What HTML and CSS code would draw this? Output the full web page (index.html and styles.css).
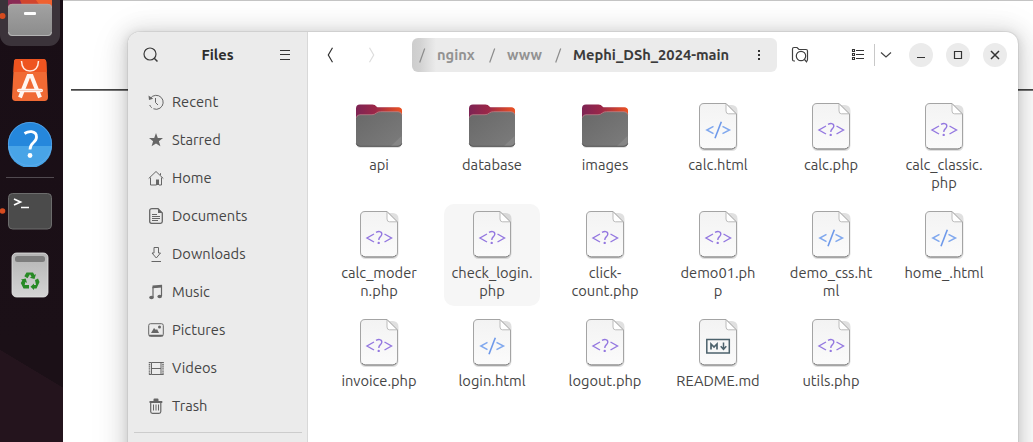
FILE: index.html
```html
<!DOCTYPE html>
<html lang="en">
<head>
<meta charset="utf-8">
<title>Files</title>
<link rel="stylesheet" href="styles.css">
</head>
<body>
<svg class="defs" width="0" height="0">
  <defs>
    <linearGradient id="fold-back" x1="0" x2="1"><stop offset="0" stop-color="#7d2454"/><stop offset=".42" stop-color="#9c2748"/><stop offset=".7" stop-color="#c43d33"/><stop offset="1" stop-color="#ec5324"/></linearGradient>
    <linearGradient id="fold-front" x1="0" y1="0" x2="1" y2="1"><stop offset="0" stop-color="#686868"/><stop offset="1" stop-color="#7c7c7c"/></linearGradient>
    <linearGradient id="paper" x1="0" y1="0" x2="0" y2="1"><stop offset="0" stop-color="#f3f3f3"/><stop offset="1" stop-color="#fbfbfb"/></linearGradient>
    <linearGradient id="drawer" x1="0" y1="0" x2="0" y2="1"><stop offset="0" stop-color="#a2a2a2"/><stop offset="1" stop-color="#8c8c8c"/></linearGradient>
    <linearGradient id="bin" x1="0" y1="0" x2="0" y2="1"><stop offset="0" stop-color="#b4b4b4"/><stop offset="1" stop-color="#d4d4d4"/></linearGradient>
    <symbol id="folder" viewBox="0 0 48 50">
      <rect x="1.500" y="7" width="45" height="39" rx="4" fill="#000" opacity=".12"/>
      <path d="M22 5.500H43.500Q47 5.500 47 9.500V26H22Z" fill="url(#fold-back)"/>
      <path d="M1 6.500Q1 2.500 5 2.500H17.500Q20 2.500 21.500 4.500L22.500 5.500H43.500Q47 5.500 47 9.500V26H1Z" fill="url(#fold-back)"/>
      <path d="M1 17.500Q1 13 5 13H17Q19.500 13 21.500 11.200Q23 10 25.500 10H43Q47 10 47 14V40.500Q47 44.500 43 44.500H5Q1 44.500 1 40.500Z" fill="url(#fold-front)"/>
      <path d="M1.500 15.500Q2 12.700 5 12.700H17Q19.500 12.700 21.500 10.900Q23 9.700 25.500 9.700H43Q46 9.700 46.700 12.500" fill="none" stroke="#b5848a" stroke-width=".8"/>
      <path d="M36 44L46.500 34V40.500Q46.500 44 43 44Z" fill="#868686"/>
      <path d="M1.300 41.500Q2 44.300 5 44.300H43Q46 44.300 46.700 41.500" fill="none" stroke="#555" stroke-width="1"/>
    </symbol>
    <symbol id="page" viewBox="0 0 48 50">
      <rect x="5" y="3" width="38.500" height="46" rx="5.500" fill="#000" opacity=".12"/>
      <path d="M10 1.500H32L42.500 12V42Q42.500 47 37.500 47H10.500Q5.500 47 5.500 42V6Q5.500 1.500 10 1.500Z" fill="url(#paper)" stroke="#a4a4a4" stroke-width="1"/>
      <path d="M7 45Q8.500 47 10.500 47H37.500Q39.500 47 41 45" fill="none" stroke="#888" stroke-width="1"/>
      <path d="M32 1.800V9Q32 11.800 34.500 11.800H42.200Z" fill="#fff" stroke="#b4b4b4" stroke-width=".9"/>
    </symbol>
    <symbol id="php" viewBox="0 0 48 50">
      <use href="#page"/>
      <g fill="none" stroke="#9478e0" stroke-width="1.400">
        <path d="M19 24L12 28L19 32M29.500 24L36.500 28L29.500 32"/>
        <path d="M21 22.300Q23 21.300 24.800 21.600Q27 22 26.800 24.300Q26.700 25.700 25.200 26.900Q23.700 28.200 23.800 30"/>
      </g>
      <circle cx="23.700" cy="32.900" r="1.200" fill="#9478e0"/>
    </symbol>
    <symbol id="html" viewBox="0 0 48 50">
      <use href="#page"/>
      <path d="M19.500 24.300L12.800 28L19.500 31.700M28.500 24.300L35.500 28L28.500 31.700" fill="none" stroke="#80a8ee" stroke-width="1.500"/>
      <path d="M27.300 19.700L21 36.300" stroke="#6e99ea" stroke-width="1.600"/>
    </symbol>
    <symbol id="md" viewBox="0 0 48 50">
      <use href="#page"/>
      <rect x="12.800" y="21.500" width="22.500" height="13.500" fill="#f6f7f7" stroke="#4c626c" stroke-width="1.500"/>
      <path d="M17 31.500V26L20 29L23 26V31.500" fill="none" stroke="#4c626c" stroke-width="1.700"/>
      <path d="M29.500 24.500V30.500M26.700 28.300L29.500 31.300L32.300 28.300" fill="none" stroke="#4c626c" stroke-width="1.500"/>
    </symbol>
  </defs>
</svg>

<div class="desktop">
  <nav class="dock">
    <div class="dock-active">
      <svg width="60" height="46" viewBox="0 0 60 46">
        <path d="M8 0H52V14H8Z" fill="#8a2a55"/><path d="M20 0H52V10H24Z" fill="#d2452e"/><path d="M36 0H52V10H43Z" fill="#ef6130"/>
        <rect x="8" y="4" width="44" height="32" rx="4" fill="url(#drawer)"/>
        <path d="M8.500 8Q8.500 4.300 12 4.300H48Q51.500 4.300 51.500 8" fill="none" stroke="#b7a5a4"/>
        <path d="M8.500 32Q9 35.500 12 35.500H48Q51 35.500 51.500 32" fill="none" stroke="#b4b4b4"/>
        <rect x="24" y="12" width="12" height="3" rx="1" fill="#fff"/>
        <circle cx="2.500" cy="16" r="3" fill="#d64b1f"/>
      </svg>
    </div>
    <svg class="dock-store" width="60" height="43" viewBox="0 0 60 43">
      <path d="M14 4Q14 1 17 1H43Q46 1 46.300 4L48 39Q48 43 44.500 43H15.500Q12 43 12 39Z" fill="#f06a34"/>
      <path d="M14 4Q14 1 17 1H43Q46 1 46.300 4L46.700 14H13.500Z" fill="#ee5420"/>
      <path d="M21.500 3Q22 13 30 13Q38 13 38.500 3" fill="none" stroke="#ffe9df" stroke-width="1.500"/>
      <g fill="none" stroke="#fff6f1"><path d="M20 39.500L28.500 18H31.500L40 39.500" stroke-width="4"/><path d="M18.800 32.500H41.200" stroke-width="3.600" stroke-linecap="round"/></g>
      <path d="M18 32.500H42" stroke="#f6c4b0" stroke-width=".8"/>
    </svg>
    <svg class="dock-help" width="60" height="46" viewBox="0 0 60 46">
      <circle cx="30" cy="23" r="22" fill="#2587dc"/><path d="M8 25H52A22 22 0 0 1 8 25Z" fill="#48a4e7"/>
      <circle cx="30" cy="23" r="21.600" fill="none" stroke="#62acec" stroke-width=".7"/>
      <path d="M24.500 12.500Q28 10.300 31.500 10.700Q36.500 11.300 36.500 16Q36.500 19 33.500 21.500Q30 24.500 30 28.500" fill="none" stroke="#fff" stroke-width="2.800"/>
      <circle cx="30" cy="34.500" r="2.400" fill="#fff"/>
    </svg>
    <div class="dock-line"></div>
    <svg class="dock-term" width="60" height="37" viewBox="0 0 60 37">
      <rect x="8.500" y=".5" width="43" height="35.500" rx="4" fill="#4b4b4b" stroke="#6c6c6c"/>
      <path d="M14 6L20.500 9L14 12" fill="none" stroke="#fff" stroke-width="1.700"/><path d="M21 14.500H29" stroke="#fff" stroke-width="1.500"/>
      <circle cx="2.500" cy="18" r="2.800" fill="#d64b1f"/>
    </svg>
    <svg class="dock-trash" width="60" height="46" viewBox="0 0 60 46">
      <rect x="12" y="1" width="36" height="44" rx="4.500" fill="url(#bin)" stroke="#e4e4e4" stroke-width=".8"/>
      <rect x="15" y="4" width="30" height="6" rx="2.500" fill="#7d7d7d"/>
      <g fill="#288a25">
        <path d="M26.500 20.500H33L34.500 23L36 22L34.500 27L29.800 25.700L31.500 24.700L30 22.300L27.500 26.300L24.300 24.300Z"/>
        <path d="M35 28L38 26.500L39.500 30L36.500 36.500H34V38L30.500 34.700L34 31.500V33H36Z"/>
        <path d="M29 33V36.500H23.500L20.800 31L22.300 28.500L21 27.500L25.700 26.500L27 31L25.300 30L24.700 33Z"/>
      </g>
    </svg>
  </nav>

  <main class="backdrop">
    <hr class="rule">
  </main>

  <section class="window">
    <aside class="sidebar">
      <header class="side-head">
        <svg width="16" height="16" viewBox="0 0 16 16" fill="none" stroke="#3b3b3b"><circle cx="7" cy="7" r="6" stroke-width="1.200"/><path d="M11 11L14.500 14.500" stroke-width="1.500"/></svg>
        <h1>Files</h1>
        <svg width="16" height="16" viewBox="0 0 16 16" stroke="#333" stroke-width="1"><path d="M3 3.500H13M3 7.500H13M3 12.500H13"/></svg>
      </header>
      <ul class="places">
        <li><svg viewBox="0 0 16 16"><path d="M2.500 4.200A7 7 0 1 1 1.700 11" stroke-dasharray="31 2"/><path d="M7.500 4V8.500L10 11"/><path class="solid" d="M.5 1.500L1 6L5.200 4.800Z"/></svg><span>Recent</span></li>
        <li><svg viewBox="0 0 16 16"><path class="solid" d="M8 1L9.800 5.900L15 6.100L10.900 9.300L12.400 14.300L8 11.400L3.600 14.300L5.100 9.300L1 6.100L6.200 5.900Z"/></svg><span>Starred</span></li>
        <li><svg viewBox="0 0 16 16"><path d="M.7 8.500L8 1.500L15.300 8.500M2.500 7.500V15H8.500M13.500 7.500V15H11M12.500 3.200V5"/><path class="solid" d="M8 9.500H11V15H8Z"/></svg><span>Home</span></li>
        <li><svg viewBox="0 0 16 16"><path d="M4 .7H10L14.300 5V13.500Q14.300 15.300 12.500 15.300H3.500Q1.700 15.300 1.700 13.500V2.500Q1.700.7 4 .7Z" stroke-width="1.300"/><path class="solid" d="M10 .5V5H14.500Z"/><path d="M4 6.500H9M4 8.500H12M4 10.500H12M4 12.500H10"/></svg><span>Documents</span></li>
        <li><svg viewBox="0 0 16 16"><path d="M6 1.500H10.500V7H12.500L8.300 12L4 7H6ZM3.500 15.500H13"/></svg><span>Downloads</span></li>
        <li><svg viewBox="0 0 16 16"><path d="M5 13V3.500L13.500 2V12" stroke-width="1.200"/><path class="solid" d="M4.500 1.500L14 .7V3.500L4.500 4.300Z"/><ellipse class="solid" cx="3.500" cy="13.500" rx="2.300" ry="1.800"/><ellipse class="solid" cx="11.700" cy="12.500" rx="2.300" ry="1.800"/></svg><span>Music</span></li>
        <li><svg viewBox="0 0 16 16"><rect x=".7" y="1.700" width="14.600" height="12.600" rx="1.800"/><path d="M1 13.500H15" stroke-width="1.500"/><path class="solid" d="M3 11L6 6L8 8L9 7L11 11Z"/><circle class="solid" cx="11.500" cy="5" r="1.500"/></svg><span>Pictures</span></li>
        <li><svg viewBox="0 0 16 16"><path d="M1.500 2V15M15 2V15" stroke-width="1.500" stroke-dasharray="1.300 .8"/><path d="M3.500 2.500H13V14.500H3.500ZM3.500 8.500H13M1 2.500H3.500M1 14.500H3.500M13 2.500H15.500M13 14.500H15.500"/></svg><span>Videos</span></li>
        <li><svg viewBox="0 0 16 16"><path d="M2.700 5V13.500Q2.700 15.300 4.500 15.300H11Q12.800 15.300 12.800 13.500V5" stroke-width="1.200"/><path class="solid" d="M1.500 3H5.500V1.500Q5.500.5 6.500.5H9.500Q10.500.5 10.500 1.500V3H14.300V5H1.500Z"/><path d="M5.500 6.500V12.500M8 6.500V12.500M10.500 6.500V12.500"/></svg><span>Trash</span></li>
      </ul>
      <div class="side-line"></div>
    </aside>

    <div class="content">
      <header class="toolbar">
        <svg class="nav" width="16" height="16" viewBox="0 0 16 16"><path d="M9.500 .8L5.300 8L9.500 15.200" fill="none" stroke="#333" stroke-width="1.200"/></svg>
        <svg class="nav next" width="16" height="16" viewBox="0 0 16 16"><path d="M5.500 .8L9.700 8L5.500 15.200" fill="none" stroke="#ddd" stroke-width="1.200"/></svg>
        <div class="path">
          <svg class="slash" viewBox="0 0 7 15"><path d="M.7 14.500L5.700.5"/></svg>
          <b class="nginx">nginx</b>
          <svg class="slash" viewBox="0 0 7 15"><path d="M.7 14.500L5.700.5"/></svg>
          <b class="www">www</b>
          <svg class="slash" viewBox="0 0 7 15"><path d="M.7 14.500L5.700.5"/></svg>
          <b class="current">Mephi_DSh_2024-main</b>
          <svg class="dots" width="4" height="12" viewBox="0 0 4 12" fill="#333"><path d="M1 1H3V3H1ZM1 5H3V7H1ZM1 9H3V11H1Z"/></svg>
        </div>
        <svg class="find" width="18" height="18" viewBox="0 0 18 18" fill="none" stroke="#404040" stroke-width="1.200"><path d="M4 15H3Q1.500 15 1.500 13.500V3Q1.500 1.500 3 1.500H6L8 3.500H15Q16.500 3.500 16.500 5V13.500Q16.500 15 15.500 15"/><circle cx="10" cy="10" r="4.700"/><path d="M13.400 13.400L16 16.300" stroke-width="1.400"/></svg>
        <svg class="list" width="14" height="14" viewBox="0 0 14 14" fill="none" stroke="#333"><path d="M1.500 1.500H3.500V3.500H1.500ZM1.500 5.500H3.500V7.500H1.500ZM1.500 9.500H3.500V11.500H1.500Z" stroke-width="1.100"/><path d="M5 2.500H13M5 6.500H13M5 10.500H13"/></svg>
        <div class="split"></div>
        <svg class="chevron" width="12" height="8" viewBox="0 0 12 8"><path d="M1 1.500L6 6L11 1.500" fill="none" stroke="#444" stroke-width="1.200"/></svg>
        <svg class="btn" viewBox="0 0 24 24"><path d="M8 14.500H16"/></svg>
        <svg class="btn" viewBox="0 0 24 24"><path d="M8.500 8.500H15.500V15.500H8.500Z"/></svg>
        <svg class="btn" viewBox="0 0 24 24"><path d="M8 8L16 16M16 8L8 16" stroke-width="1.500"/></svg>
      </header>
      <div class="grid">
        <div class="file"><svg><use href="#folder"/></svg><span>api</span></div>
        <div class="file"><svg><use href="#folder"/></svg><span>database</span></div>
        <div class="file"><svg><use href="#folder"/></svg><span>images</span></div>
        <div class="file"><svg><use href="#html"/></svg><span>calc.html</span></div>
        <div class="file"><svg><use href="#php"/></svg><span>calc.php</span></div>
        <div class="file"><svg><use href="#php"/></svg><span>calc_classic.<br>php</span></div>
        <div class="file"><svg><use href="#php"/></svg><span>calc_moder<br>n.php</span></div>
        <div class="file hover"><svg><use href="#php"/></svg><span>check_login.<br>php</span></div>
        <div class="file"><svg><use href="#php"/></svg><span>click-<br>count.php</span></div>
        <div class="file"><svg><use href="#php"/></svg><span>demo01.ph<br>p</span></div>
        <div class="file"><svg><use href="#html"/></svg><span>demo_css.ht<br>ml</span></div>
        <div class="file"><svg><use href="#html"/></svg><span>home_.html</span></div>
        <div class="file"><svg><use href="#php"/></svg><span>invoice.php</span></div>
        <div class="file"><svg><use href="#html"/></svg><span>login.html</span></div>
        <div class="file"><svg><use href="#php"/></svg><span>logout.php</span></div>
        <div class="file"><svg><use href="#md"/></svg><span>README.md</span></div>
        <div class="file"><svg><use href="#php"/></svg><span>utils.php</span></div>
      </div>
    </div>
  </section>
</div>
</body>
</html>
```
FILE: styles.css
```css
* { box-sizing: border-box; }
body { margin: 0; overflow: hidden; font: 14.667px/18px Ubuntu, "Noto Sans", sans-serif; color: #454545; }
svg { display: block; flex: none; }
.defs { position: absolute; }
.desktop { position: relative; display: flex; width: 1033px; height: 442px; overflow: hidden; background: #fff; }

.dock { width: 63px; height: 442px; background: linear-gradient(211deg, transparent 80.500%, #24141d 80.800%) 0 0 / 63px 442px, linear-gradient(#190e16, #1c1118); }
.dock { background: linear-gradient(211deg, #1b1017 49.500%, #24141d 50%) 0 338px / 63px 62px no-repeat, linear-gradient(#190e16 0, #1b1017 338px, #1b1017 398px, #24141d 399px); }
.dock-active { width: 60px; height: 46px; background: #3b333a; border-radius: 0 0 11px 11px; }
.dock-store { margin-top: 12px; }
.dock-help { margin-top: 20px; }
.dock-line { height: 1px; margin: 10px 9px 0 6px; background: #514a50; }
.dock-term { margin-top: 15px; }
.dock-trash { margin-top: 22px; }

.backdrop { flex: 1; border-top: 1px solid #c4c4c4; padding: 88px 0 0 8px; }
.rule { height: 2px; margin: 0; border: 0; background: linear-gradient(#444 50%, #777 50%); }

.window { position: absolute; left: 128px; top: 32px; width: 890px; height: 450px; display: flex; overflow: hidden; background: #fff; border-radius: 12px; }
.window { box-shadow: 0 0 0 1px rgba(0,0,0,.06), 0 2px 8px 2px rgba(0,0,0,.09), 0 3px 20px 8px rgba(0,0,0,.09), 0 5px 38px 8px rgba(0,0,0,.06); }
.sidebar { width: 180px; background: #ebebeb; border-right: 1px solid #d8d8d8; }
.side-head { display: flex; align-items: center; justify-content: space-between; height: 46px; padding: 0 14px 0 15px; }
.side-head h1 { margin: 0 1px 0 0; font-size: 14.667px; font-weight: 700; color: #2e2e2e; }
.places { list-style: none; margin: 5px 0 0; padding: 0; }
.places li { display: flex; align-items: center; height: 38px; padding-left: 20px; gap: 8px; }
.places svg { width: 16px; height: 16px; fill: none; stroke: #666; }
.places .solid { fill: #666; stroke: none; }
.side-line { height: 1px; margin: 7px 5px 0 6px; background: #ccc; }

.content { flex: 1; }
.toolbar { display: flex; align-items: center; height: 46px; padding-left: 15px; }
.next { margin-left: 25px; }
.path { display: flex; align-items: center; width: 365px; height: 34px; margin-left: 32px; padding-left: 7px; border-radius: 6px; background: linear-gradient(90deg, #cdcdcd, #d2d2d2 8px, #ebebeb 24px); }
.path b { font-weight: 700; color: #929292; white-space: nowrap; }
.path .current { width: 156px; margin: 0 28px 0 11px; color: #3b3b3b; }
.slash { width: 7px; height: 15px; fill: none; stroke: #8c8c8c; stroke-width: 1.200; }
.nginx { width: 40px; margin: 0 12px 0 11px; }
.www { width: 35px; margin: 0 13px 0 11px; }
.find { margin-left: 14px; }
.list { margin-left: 42px; }
.split { width: 1px; height: 22px; margin: 0 5px 0 9px; background: #c8c8c8; }
.btn { width: 24px; height: 24px; margin-left: 13px; border-radius: 50%; background: #ebebeb; fill: none; stroke: #333; stroke-width: 1.200; }
.chevron + .btn { margin-left: 17px; }

.grid { display: grid; grid-template-columns: repeat(6, 96px); grid-auto-rows: 102px; gap: 6px 17px; padding: 18px 0 0 23px; }
.file { display: flex; flex-direction: column; align-items: center; padding-top: 6px; border-radius: 10px; text-align: center; white-space: nowrap; }
.file svg { width: 48px; height: 50px; }
.file span { margin-top: 4px; }
.hover { background: #f6f6f6; }
```
